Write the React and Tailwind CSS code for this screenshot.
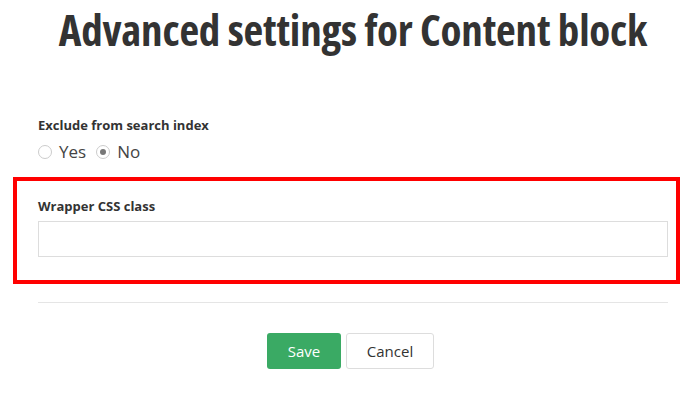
export default function App() {
  return (
    <div className="w-[696px] h-[393px] bg-white overflow-hidden font-['Open_Sans','Liberation_Sans',sans-serif] text-[#333]">
      {/* Title */}
      <h1 className="pt-[2px] text-center text-[43px] leading-[56px] font-bold [font-stretch:75%] tracking-[-0.2px] pl-[10px]">
        Advanced settings for Content block
      </h1>

      <div className="pl-[38px] pr-[28px]">
        {/* Exclude from search index */}
        <div className="mt-[58px]">
          <label className="block text-[13px] leading-[18px] font-bold">Exclude from search index</label>
          <div className="mt-[7px] flex items-center text-[17px] leading-[22px] text-[#444]">
            <span className="w-[14px] h-[14px] rounded-full border border-[#ccc] bg-white" />
            <span className="ml-[7px]">Yes</span>
            <span className="ml-[10px] w-[14px] h-[14px] rounded-full border border-[#ccc] bg-white flex items-center justify-center">
              <span className="w-[6px] h-[6px] rounded-full bg-[#777]" />
            </span>
            <span className="ml-[7px]">No</span>
          </div>
        </div>

        {/* Wrapper CSS class, highlighted */}
        <div className="relative mt-[14px] pt-[20px] pb-[27px]">
          <div className="absolute left-[-25px] right-[-12px] top-0 bottom-0 border-4 border-[#ff0000] pointer-events-none" />
          <label className="block text-[13px] leading-[18px] font-bold">Wrapper CSS class</label>
          <input
            type="text"
            className="mt-[6px] block w-full h-[36px] border border-[#ddd] bg-white outline-none px-2 text-sm"
          />
        </div>

        <hr className="mt-[18px] border-0 border-t border-[#e5e5e5]" />

        {/* Buttons */}
        <div className="mt-[30px] flex justify-center gap-[5px] ml-[-5px]">
          <button className="w-[74px] h-[36px] rounded-[3px] bg-[#3aaa64] text-white text-[15px]">Save</button>
          <button className="w-[88px] h-[36px] rounded-[3px] border border-[#ddd] bg-white text-[15px] text-[#333]">Cancel</button>
        </div>
      </div>
    </div>
  )
}
